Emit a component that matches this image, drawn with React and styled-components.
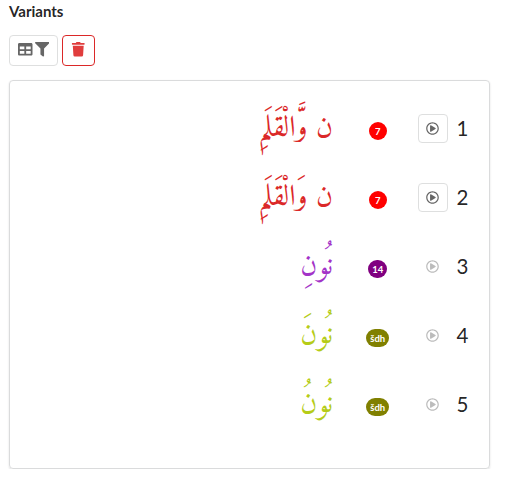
import React from 'react';
import styled, { createGlobalStyle } from 'styled-components';
import { FaTable, FaFilter, FaTrash, FaRegPlayCircle } from 'react-icons/fa';

const Global = createGlobalStyle`
  body { margin: 0; background: #fff; font-family: Lato, "Liberation Sans", sans-serif; color: rgba(0,0,0,.87); }
  * { box-sizing: border-box; }
`;
const Page = styled.main`padding: 0 17px 0 9px; display: flex; flex-direction: column;`;
const Title = styled.h1`margin: 2px 0 14px; font-size: 15px; line-height: 19px; font-weight: 700;`;
const Toolbar = styled.div`display: flex; gap: 4px; margin-bottom: 14px;`;
const Button = styled.button`
  display: flex; align-items: center; justify-content: center; gap: 2px; padding: 0 0 2px;
  width: ${p => p.$w}px; height: 31px; background: #fff; border-radius: 4px;
  border: 1px solid ${p => (p.$danger ? '#db2828' : '#dedfdf')};
  color: ${p => (p.$danger ? '#e03d3d' : '#666')};
  svg { display: block; width: 14.5px; height: 14.5px; }
`;
const Panel = styled.section`
  height: 389px; padding-top: 14px; border: 1px solid #dadbdc; border-radius: 4px;
  box-shadow: 0 1px 2px rgba(34,36,38,.15);
`;
const Row = styled.div`
  height: 69px; display: grid; grid-template-columns: 323px 85px 30px 1fr;
`;
const Word = styled.span`
  direction: rtl; justify-self: end; white-space: nowrap;
  font: 29.5px/69px "Amiri", "Scheherazade New", "Noto Naskh Arabic", "DejaVu Sans", serif;
  color: ${p => p.$color};
`;
const Badge = styled.span`
  justify-self: center; margin: 27px 0 0 4.5px; height: 18px; min-width: 18px; padding: 0 4.2px;
  border-radius: 9px; background: ${p => p.$color}; color: #fff;
  font-size: 9.5px; font-weight: 700; line-height: 19px; text-align: center;
`;
const Play = styled.button`
  width: 30px; height: 29px; margin-top: 19px; padding: 0 1px 1px 0;
  display: flex; align-items: center; justify-content: center; background: transparent;
  border: 1px solid ${p => (p.$muted ? 'transparent' : '#dedfdf')}; border-radius: 4px;
  color: ${p => (p.$muted ? '#bcbcbc' : '#666')};
  svg { width: 13px; height: 13px; }
`;
const Index = styled.span`font-size: 20.5px; line-height: 67px; padding-left: 8.5px;`;

const variants = [
  { text: 'ن وَّالْقَلَمِ', color: '#db2828', label: '7', badge: '#f00', playable: true },
  { text: 'ن وَالْقَلَمِ', color: '#db2828', label: '7', badge: '#f00', playable: true },
  { text: 'نُونِ', color: '#a333c8', label: '14', badge: '#800080' },
  { text: 'نُونَ', color: '#b5cc18', label: 'šdh', badge: '#808000' },
  { text: 'نُونُ', color: '#b5cc18', label: 'šdh', badge: '#808000' },
];

export default function App() {
  return (
    <>
      <Global />
      <Page>
        <Title>Variants</Title>
        <Toolbar>
          <Button $w={49} aria-label="Filter table"><FaTable /><FaFilter /></Button>
          <Button $w={33} $danger aria-label="Delete"><FaTrash /></Button>
        </Toolbar>
        <Panel>
          {variants.map((v, i) => (
            <Row key={v.text}>
              <Word $color={v.color} lang="ar">{v.text}</Word>
              <Badge $color={v.badge}>{v.label}</Badge>
              <Play $muted={!v.playable} disabled={!v.playable} aria-label="Play"><FaRegPlayCircle /></Play>
              <Index>{i + 1}</Index>
            </Row>
          ))}
        </Panel>
      </Page>
    </>
  );
}
